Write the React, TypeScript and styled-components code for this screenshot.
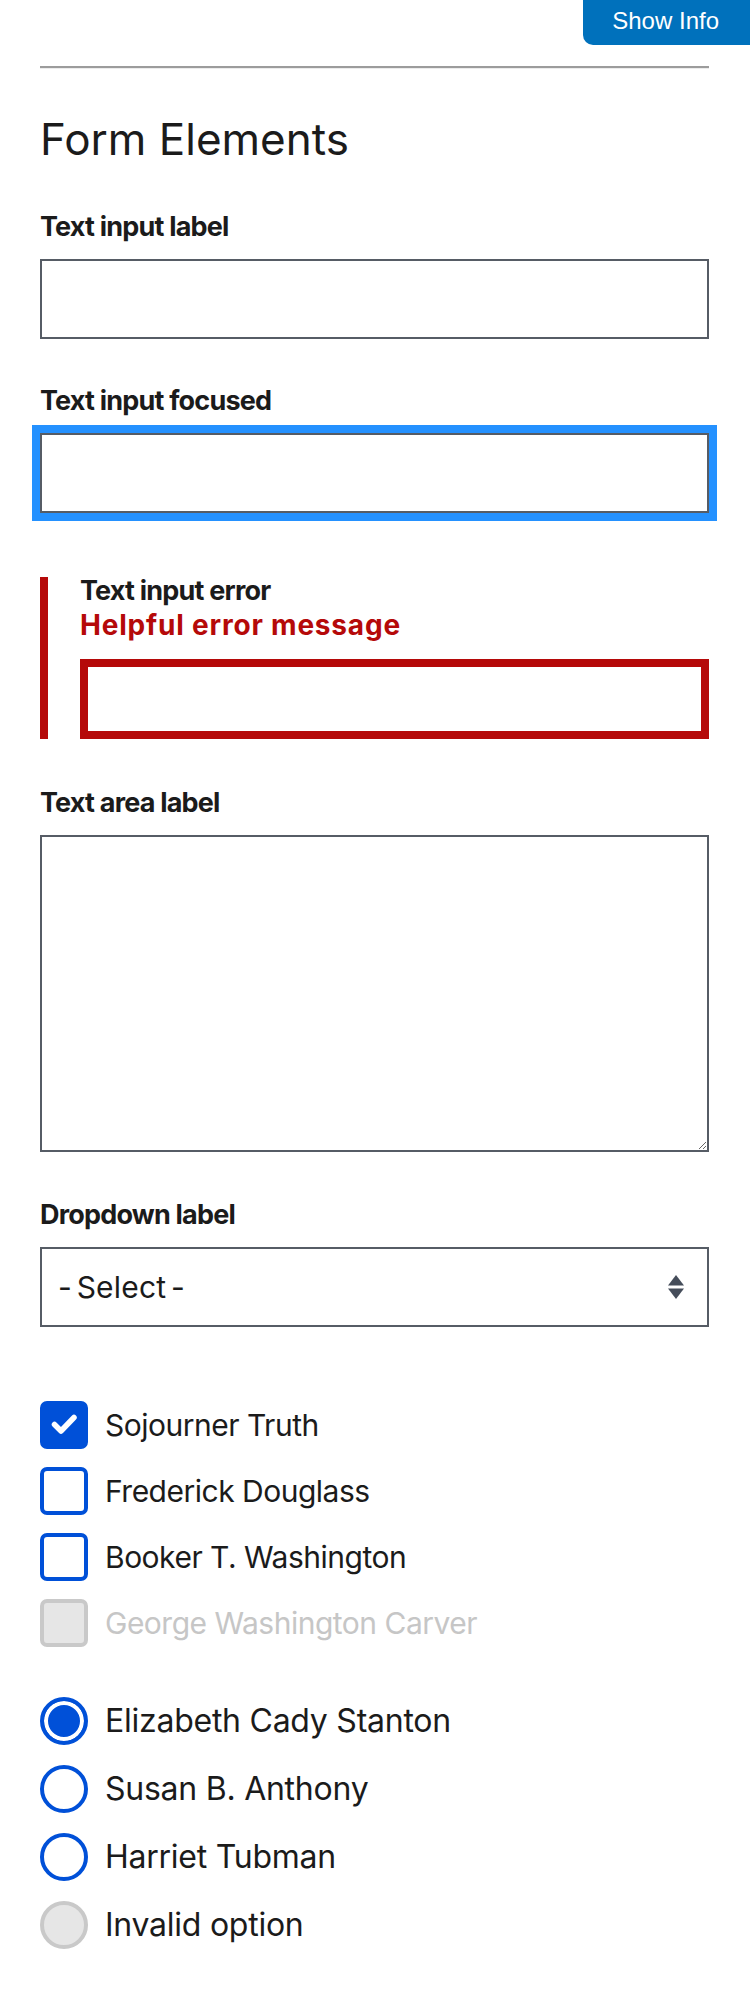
import React from "react";
import styled, { createGlobalStyle, css } from "styled-components";

const Global = createGlobalStyle`
  html, body { margin: 0; padding: 0; background: #ffffff; }
  body { font-family: Inter, "Noto Sans", sans-serif; color: #1b1b1b; }
  *, *::before, *::after { box-sizing: border-box; }
`;

const Page = styled.div`
  width: 750px;
  min-height: 2012px;
  background: #fff;
`;

const TopBar = styled.div`
  display: flex;
  justify-content: flex-end;
`;

const InfoButton = styled.button`
  height: 45px;
  padding: 7px 31px 0 29px;
  border: none;
  border-radius: 0 0 0 10px;
  background: #0071bc;
  color: #ffffff;
  font-family: "Liberation Sans", Arial, sans-serif;
  font-size: 24px;
  line-height: 27px;
  display: flex;
  align-items: flex-start;
  cursor: pointer;
`;

const Content = styled.main`
  padding: 0 41px 0 40px;
  display: flex;
  flex-direction: column;
`;

const Rule = styled.hr`
  margin: 21px 0 0;
  height: 0;
  border: none;
  border-top: 2px solid #9c9c9c;
  border-bottom: 1px solid #ececec;
`;

const Heading = styled.h2`
  margin: 44px 0 0;
  font-size: 44px;
  line-height: 53px;
  font-weight: 400;
  color: #1b1b1b;
`;

const Group = styled.div<{ $top: number }>`
  margin-top: ${(p) => p.$top}px;
  display: flex;
  flex-direction: column;
`;

const ErrorGroup = styled.div`
  margin-top: 64px;
  display: flex;
  flex-direction: column;
  border-left: 8px solid #b50909;
  padding-left: 32px;
`;

const Label = styled.label`
  font-size: 27px;
  line-height: 28px;
  font-weight: 700;
  color: #1b1b1b;
  letter-spacing: -0.8px;
`;

const ErrorMessage = styled.span`
  margin-top: 6px;
  font-size: 28px;
  line-height: 28px;
  font-weight: 700;
  color: #b50909;
  letter-spacing: 0.8px;
`;

const fieldBase = css`
  display: block;
  width: 100%;
  margin: 0;
  border: 2px solid #565c65;
  border-radius: 0;
  background: #ffffff;
  font-family: Inter, "Noto Sans", sans-serif;
  font-size: 27px;
  color: #1b1b1b;
  padding: 0 16px;
  outline: none;
`;

const TextInput = styled.input<{ $state?: "focus" | "error" }>`
  ${fieldBase};
  height: 80px;
  margin-top: ${(p) => (p.$state === "error" ? 20 : 18)}px;
  ${(p) =>
    p.$state === "focus" &&
    css`
      outline: 8px solid #2491ff;
      outline-offset: 0;
    `}
  ${(p) =>
    p.$state === "error" &&
    css`
      border: 8px solid #b50909;
    `}
`;

const TextArea = styled.textarea`
  ${fieldBase};
  height: 317px;
  margin-top: 18px;
  padding: 12px 16px;
`;

const SelectWrap = styled.div`
  position: relative;
  margin-top: 18px;
`;

const Select = styled.select`
  ${fieldBase};
  height: 80px;
  appearance: none;
  -webkit-appearance: none;
  font-size: 30px;
  letter-spacing: 0.2px;
  word-spacing: -4px;
`;

const SelectArrows = styled.svg`
  position: absolute;
  right: 25px;
  top: 28px;
  width: 16px;
  height: 24px;
  pointer-events: none;
`;

const ChoiceList = styled.div<{ $top: number; $gap: number }>`
  margin-top: ${(p) => p.$top}px;
  display: flex;
  flex-direction: column;
  gap: ${(p) => p.$gap}px;
`;

const Choice = styled.label`
  display: flex;
  align-items: center;
  gap: 17px;
  height: 48px;
`;

const ChoiceText = styled.span<{ $disabled?: boolean; $large?: boolean }>`
  font-size: ${(p) => (p.$large ? 32 : 30)}px;
  line-height: 36px;
  font-weight: 400;
  letter-spacing: ${(p) => (p.$large ? -0.25 : -0.5)}px;
  color: ${(p) => (p.$disabled ? "#c6c6c6" : "#1b1b1b")};
`;

const Box = styled.span<{ $checked?: boolean; $disabled?: boolean }>`
  flex: none;
  width: 48px;
  height: 48px;
  border-radius: 7px;
  border: 4px solid #0050d8;
  background: #ffffff;
  display: flex;
  align-items: center;
  justify-content: center;
  ${(p) =>
    p.$checked &&
    css`
      background: #0050d8;
    `}
  ${(p) =>
    p.$disabled &&
    css`
      border-color: #c9c9c9;
      background: #e6e6e6;
    `}
`;

const Radio = styled.span<{ $checked?: boolean; $disabled?: boolean }>`
  flex: none;
  width: 48px;
  height: 48px;
  border-radius: 50%;
  border: 4px solid #0050d8;
  background: #ffffff;
  ${(p) =>
    p.$checked &&
    css`
      background: #0050d8;
      box-shadow: inset 0 0 0 4px #ffffff;
    `}
  ${(p) =>
    p.$disabled &&
    css`
      border-color: #c9c9c9;
      background: #e6e6e6;
    `}
`;

const Check = () => (
  <svg width="40" height="40" viewBox="0 0 40 40" aria-hidden="true">
    <path
      d="M10.5 19.5 L17 26 L30 12.5"
      fill="none"
      stroke="#ffffff"
      strokeWidth="5.5"
      strokeLinecap="round"
      strokeLinejoin="round"
    />
  </svg>
);

const checkboxes = [
  { name: "Sojourner Truth", checked: true },
  { name: "Frederick Douglass" },
  { name: "Booker T. Washington" },
  { name: "George Washington Carver", disabled: true },
];

const radios = [
  { name: "Elizabeth Cady Stanton", checked: true },
  { name: "Susan B. Anthony" },
  { name: "Harriet Tubman" },
  { name: "Invalid option", disabled: true },
];

export default function App() {
  return (
    <Page>
      <Global />
      <TopBar>
        <InfoButton type="button">Show Info</InfoButton>
      </TopBar>
      <Content>
        <Rule />
        <Heading>Form Elements</Heading>

        <Group $top={47}>
          <Label htmlFor="input-type-text">Text input label</Label>
          <TextInput id="input-type-text" type="text" />
        </Group>

        <Group $top={48}>
          <Label htmlFor="input-focus">Text input focused</Label>
          <TextInput id="input-focus" type="text" $state="focus" />
        </Group>

        <ErrorGroup>
          <Label htmlFor="input-error">Text input error</Label>
          <ErrorMessage>Helpful error message</ErrorMessage>
          <TextInput id="input-error" type="text" $state="error" />
        </ErrorGroup>

        <Group $top={50}>
          <Label htmlFor="input-textarea">Text area label</Label>
          <TextArea id="input-textarea" />
        </Group>

        <Group $top={49}>
          <Label htmlFor="options">Dropdown label</Label>
          <SelectWrap>
            <Select id="options" defaultValue="">
              <option value="">- Select -</option>
              <option value="1">Option A</option>
              <option value="2">Option B</option>
            </Select>
            <SelectArrows viewBox="0 0 16 24" aria-hidden="true">
              <polygon points="8,0 16,10.5 0,10.5" fill="#454d5a" />
              <polygon points="0,13.5 16,13.5 8,24" fill="#454d5a" />
            </SelectArrows>
          </SelectWrap>
        </Group>

        <ChoiceList $top={74} $gap={18}>
          {checkboxes.map((c) => (
            <Choice key={c.name}>
              <Box $checked={c.checked} $disabled={c.disabled}>
                {c.checked && <Check />}
              </Box>
              <ChoiceText $disabled={c.disabled}>{c.name}</ChoiceText>
            </Choice>
          ))}
        </ChoiceList>

        <ChoiceList $top={50} $gap={20}>
          {radios.map((r) => (
            <Choice key={r.name}>
              <Radio $checked={r.checked} $disabled={r.disabled} />
              <ChoiceText $large>{r.name}</ChoiceText>
            </Choice>
          ))}
        </ChoiceList>
      </Content>
    </Page>
  );
}
